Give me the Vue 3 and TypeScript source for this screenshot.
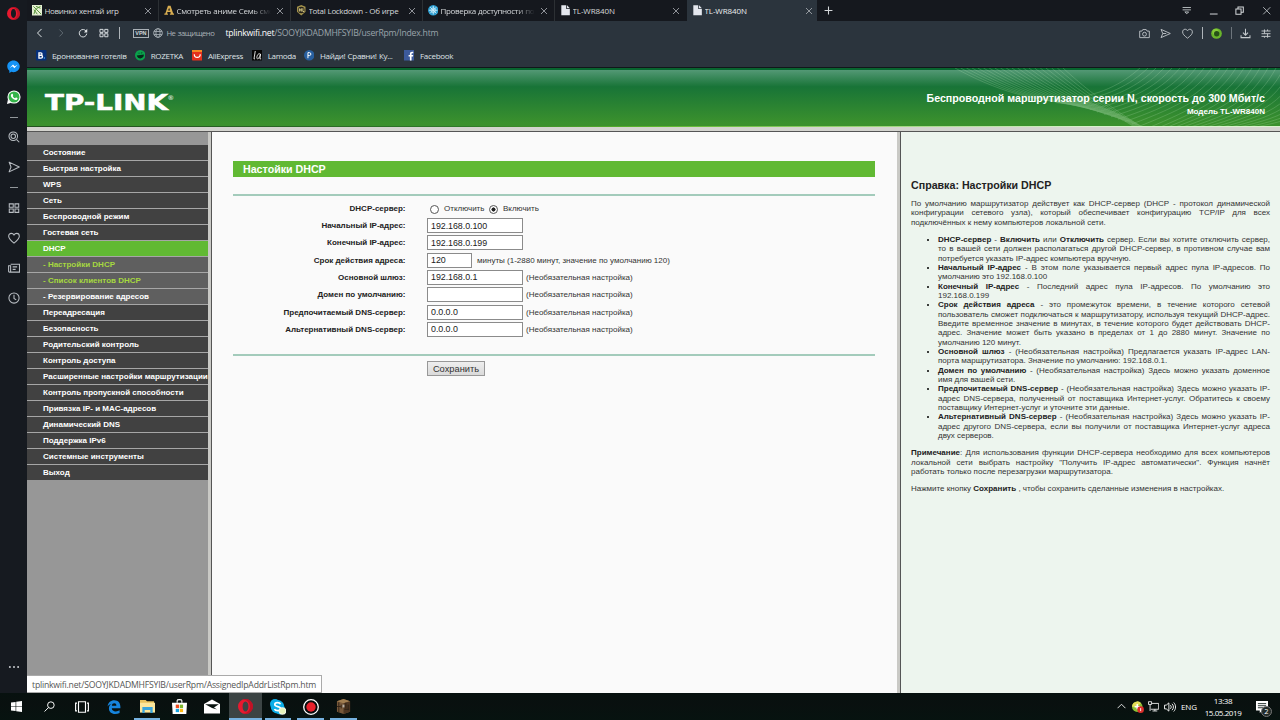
<script setup lang="ts">
import { ref, reactive, computed } from "vue";

interface Tab {
  title: string;
  icon: string;
  fade?: boolean;
}

interface Field {
  label: string;
  key: string;
  short?: boolean;
  note?: string;
}

// svg bodies, all drawn on a 16x16 grid
const icons: Record<string, string> = {
  opera: `<path fill="#e8192f" fill-rule="evenodd" d="M8 0a8 8 0 1 0 0 16A8 8 0 0 0 8 0zm0 2.6c2 0 3.1 2.4 3.1 5.4S10 13.4 8 13.4 4.9 11 4.9 8 6 2.6 8 2.6z"/><path fill="#a70e20" d="M8 0c4.400 0 8 3.600 8 8s-3.600 8-8 8c-1 0-2-.2-2.500-.5C9.500 15.500 12.800 12 12.800 8S9.500.5 5.500.5C6 .2 7 0 8 0z" opacity=".6"/>`,
  messenger: `<path fill="#1593f5" d="M8 .5C3.700.5.3 3.700.3 7.800c0 2.200 1 4.100 2.600 5.400V16l2.500-1.400c.8.2 1.700.4 2.600.4 4.300 0 7.700-3.200 7.700-7.200S12.300.5 8 .5z"/><path fill="#fff" d="M3.300 9.900l4.100-4.300 2.100 2.100 3.500-2-4 4.300-2.200-2.200z"/>`,
  whatsapp: `<circle cx="8" cy="8" r="7.500" fill="#fff"/><path fill="#fff" d="M1 11L0 16l5-1.500z"/><circle cx="8" cy="8" r="6.300" fill="#35b44a"/><path fill="#fff" d="M5.700 4.300c.6-.4 1 0 1.300 1.300.2.700-.5 1-.3 1.400.5 1 1.300 1.900 2.500 2.300.5.1.8-1 1.300-.8 1.400.6 1.800.9 1.500 1.500-.7 1.800-2.500 1.700-4.400.6C5.400 9.400 4 7.200 4.500 5.700c.2-.6.600-1.100 1.200-1.400z"/>`,
  search: `<g fill="none" stroke="#b8bdc2" stroke-width="1.400"><circle cx="7" cy="7" r="5.700"/><circle cx="7" cy="7" r="3"/><path d="M11.500 11.500L15 15"/></g>`,
  send: `<path fill="none" stroke="#b8bdc2" stroke-width="1.400" stroke-linejoin="round" d="M1.500 1.500L15 8 1.500 14.500 4 8z"/>`,
  grid: `<path fill="none" stroke="#b8bdc2" stroke-width="1.400" d="M1.700 2.500H7V7H1.700zM9.300 2.500h5V7h-5zM1.700 9.300H7v4.500H1.700zM9.300 9.300h5v4.500h-5z"/>`,
  heart: `<path fill="none" stroke="#b8bdc2" stroke-width="1.400" d="M8 14.800C3 11 .9 8.700.9 5.700c0-2.200 1.500-3.900 3.500-3.900C6 1.800 7.300 2.700 8 4c.7-1.300 2-2.200 3.600-2.200 2 0 3.500 1.700 3.500 3.900 0 3-2.100 5.300-7.100 9.100z"/>`,
  news: `<path fill="none" stroke="#b8bdc2" stroke-width="1.400" d="M3.500 3h11.800v10.500H2c-.8 0-1.200-.5-1.200-1.200V5h2.700v7.500M6.200 6.500h6M6.200 9.800h4"/>`,
  clock: `<g fill="none" stroke="#b8bdc2" stroke-width="1.400"><circle cx="8" cy="8" r="6.800"/><path d="M8 3.800V8.500l3 2"/></g>`,
  dots: `<g fill="#c9cdd0"><circle cx="2.500" cy="8" r="1.300"/><circle cx="8" cy="8" r="1.300"/><circle cx="13.500" cy="8" r="1.300"/></g>`,
  back: `<path fill="none" stroke="#dfe3e6" stroke-width="1.600" d="M10.500 1.500L4 8l6.500 6.500"/>`,
  forward: `<path fill="none" stroke="#5e6870" stroke-width="1.600" d="M5.500 2.500L11 8l-5.500 5.500"/>`,
  reload: `<path fill="none" stroke="#dfe3e6" stroke-width="1.500" d="M13.300 5.500A6 6 0 1 0 14 9"/><path fill="#dfe3e6" d="M14.800 1v6H9.500z"/>`,
  speed: `<path fill="none" stroke="#dfe3e6" stroke-width="1.500" d="M1.500 2.200h5V7h-5zM9.200 2.200h5V7h-5zM1.500 9.200h5V14h-5zM9.200 9.200h5V14h-5z"/>`,
  globe: `<g fill="none" stroke="#a9b1b7" stroke-width="1.400"><circle cx="8" cy="8" r="6.900"/><ellipse cx="8" cy="8" rx="3.300" ry="6.900"/><path d="M1.500 5.500h13M1.500 10.500h13"/></g>`,
  camera: `<g fill="none" stroke="#b8bdc2" stroke-width="1.400"><path d="M1 4.500h3.200L5.500 2.300h5l1.300 2.200H15v9.500H1z"/><circle cx="8" cy="9" r="2.800"/></g>`,
  plane: `<path fill="none" stroke="#b8bdc2" stroke-width="1.400" stroke-linejoin="round" d="M1.500 2L15 8 1.500 14 4 8zM4 8h5"/>`,
  orb: `<circle cx="8" cy="8" r="7.800" fill="#69b52b"/><circle cx="6.500" cy="5.500" r="4.500" fill="#9ad843" opacity=".6"/><circle cx="8.300" cy="8.300" r="3.900" fill="#265117"/>`,
  download: `<path fill="none" stroke="#c5cacd" stroke-width="1.500" d="M8 1v9M4.300 6.800L8 10.500l3.700-3.700M1.500 10.500V14h13v-3.500"/>`,
  sliders: `<path fill="none" stroke="#c5cacd" stroke-width="1.500" d="M.8 4h14.400M.8 8.300h14.400M.8 12.600h14.400M5.500 1.500v6.800M10.500 1.500V4M10.500 8.300v6.500M5.500 12.600v2.200"/>`,
  close: `<path fill="none" stroke="#aeb3b7" stroke-width="1.600" d="M2 2l12 12M14 2L2 14"/>`,
  plus: `<path fill="none" stroke="#d4d7da" stroke-width="1.900" d="M8 1v14M1 8h14"/>`,
  tabmenu: `<path fill="none" stroke="#c5cacd" stroke-width="1.500" d="M1 2.500h14M1 6.500h14M4.800 10L8 13.200 11.200 10z"/>`,
  minimize: `<path stroke="#d4d7da" stroke-width="1.700" d="M1.500 13.500h13"/>`,
  restore: `<path fill="none" stroke="#d4d7da" stroke-width="1.700" d="M1.500 5h8.700v8.700H1.500zM5 5V1.700h9v8.700h-3.800"/>`,
  page: `<path fill="#e4e7ee" d="M2 .5h7.500V6H15v9.500H2z"/><path fill="#e4e7ee" d="M10.700.5L15 4.900h-4.300z"/>`,
  puzzle: `<path fill="#e5efd3" d="M0 0h16v16H0z"/><path fill="none" stroke="#58933a" stroke-width="1.500" d="M2 2l12 12M13 2c-6 3-9 5-10 12M6 2l7 3M3 7l5 7"/>`,
  letterA: `<path fill="#d8ad51" fill-rule="evenodd" d="M6 1h4l4 12h1.500v2H9v-2h1.500l-.7-2.300H5.300L4.500 13H6v2H.5v-2H2zm.2 7.500h3L7.800 4z"/>`,
  badge: `<path fill="#a4934c" d="M8 0l6.500 2.700v7.500L8 16l-6.500-5.800V2.700z"/><circle cx="8" cy="7.500" r="5" fill="#26231a"/><path stroke="#e0d18b" stroke-width="1.500" d="M5 5v5M5 7.500h3M8 5v5M10.500 5v5h2"/>`,
  snow: `<circle cx="8" cy="8" r="8" fill="#2e9fd2"/><path stroke="#d5f1fb" stroke-width="1.300" fill="none" d="M8 1.500v13M1.500 8h13M3.300 3.300l9.400 9.400M12.700 3.300l-9.400 9.400"/><circle cx="8" cy="8" r="3.500" fill="none" stroke="#d5f1fb"/>`,
  booking: `<rect width="16" height="16" rx="1.500" fill="#06307b"/><path fill="none" stroke="#fff" stroke-width="2" d="M4.500 3.500v9h3c3.300 0 3.300-4.500 0-4.500h-3M4.500 4.300h2.700c2.600 0 2.600 3.700 0 3.700"/><circle cx="12.700" cy="12.300" r="1.200" fill="#4ca9ef"/>`,
  rozetka: `<circle cx="8" cy="8" r="8" fill="#0ba24c"/><path fill="#06271a" d="M2.700 8.500L13.500 7c.4 7-9.300 8-10.800 1.500zM4 4.500l3-.5v1.500zM9 3.700l3 .3-3 1.500z"/>`,
  ali: `<rect width="16" height="16" rx="1" fill="#e5301c"/><path fill="#f68b23" d="M0 0h16v3H0z"/><path fill="none" stroke="#fff" stroke-width="1.800" d="M3.500 6.500c0 6.500 9 6.500 9 0"/>`,
  lamoda: `<path fill="#050505" d="M0 0h16v16H0z"/><path fill="none" stroke="#fff" stroke-width="1.300" d="M5 1.500L3 13.500h1.500M12.500 6C8 4 6 13 8.500 13.500S13 6 13 6l-1 7.500h2"/>`,
  price: `<circle cx="8" cy="8" r="8" fill="#285f9f"/><path fill="none" stroke="#fff" stroke-width="1.500" d="M6 12.500V4h2.300c2.900 0 2.900 4.500 0 4.500H6"/>`,
  facebook: `<path fill="#3c5a9c" d="M0 0h16v16H0z"/><path fill="#fff" d="M9 16V9.800H7V7.500h2V5.700C9 3.700 10.200 2.500 12.200 2.500h1.900v2.300h-1.300c-1 0-1.300.4-1.300 1.200v1.500H14l-.3 2.300h-2.200V16z"/>`,
  windows: `<path fill="#fff" d="M0 2.300l6.700-1v6.200H0zM7.600 1.200L16 0v7.500H7.600zM0 8.500h6.700v6.200L0 13.700zM7.600 8.500H16V16l-8.400-1.200z"/>`,
  find: `<g fill="none" stroke="#fff" stroke-width="1.400"><circle cx="10" cy="6" r="4.800"/><path d="M6.500 9.500L.8 15.300"/></g>`,
  taskview: `<path fill="none" stroke="#fff" stroke-width="1.300" d="M4 2h8v12H4zM2.300 3.500H.7v9h1.600M13.700 3.500h1.600v9h-1.600"/>`,
  edge: `<path fill="#1684dc" d="M.7 7.300C1.300 2.800 4.300.3 8.300.3c4.500 0 7 3.200 7 7.500v1.700H5.500c.1 2.500 2.100 3.500 4.500 3.500 1.700 0 3.200-.4 4.400-1.200v3.100c-1.500.8-3.200 1.100-5 1.100-4.500 0-7.200-2.600-7.200-6.600 0-2.300 1.200-4.100 3.300-5C3.300 4.900 1.600 5.900.7 7.300zm4.900-.8h5.100c0-1.700-.8-2.700-2.400-2.700-1.500 0-2.500 1-2.700 2.700z"/>`,
  folder: `<path fill="#e9c25e" d="M0 1h6l1.500 1.500H15v3H0z"/><path fill="#fce69b" d="M0 4h16v10.500H0z"/><path fill="#38a4dc" d="M2.500 8.500h11V15H11v-3.300H5V15H2.500z"/>`,
  store: `<path fill="none" stroke="#fff" stroke-width="1.200" d="M5.500 4V1.500C5.500.3 10.500.3 10.500 1.500V4"/><path fill="#fff" d="M0 4h16l-.7 12H.7z"/><path fill="#f04e23" d="M4 6h3.500v3.700H4z"/><path fill="#7db72f" d="M8.300 6h3.500v3.700H8.300z"/><path fill="#16a5e5" d="M4 10.500h3.500V14H4z"/><path fill="#fdb813" d="M8.300 10.500h3.500V14H8.300z"/>`,
  mail: `<path fill="#fff" d="M0 5l8-4.500L16 5v9.500H0z"/><path fill="#08120f" d="M1.200 5.300h13.600L10 8.400l3 2.200-5-1.500z"/>`,
  skype: `<circle cx="5" cy="5" r="5" fill="#0cade8"/><circle cx="10" cy="10.500" r="5" fill="#0cade8"/><circle cx="7.500" cy="7.800" r="6.800" fill="#0cade8"/><path fill="none" stroke="#fff" stroke-width="1.700" d="M10.500 5.200C9.800 3.300 4.800 3 4.800 5.500c0 2.700 5.900 1.400 5.900 4.200 0 2.600-5.400 2.500-6.200.3"/><circle cx="12.500" cy="12" r="3.800" fill="#f3f8e8"/><circle cx="12.500" cy="12" r="2.800" fill="#e8f4bb"/>`,
  record: `<circle cx="8" cy="8" r="7.300" fill="#090b0b" stroke="#fff" stroke-width="1.300"/><circle cx="8" cy="8" r="4.700" fill="#e9202b"/>`,
  cube: `<path fill="#77583a" d="M8 0l7 2.500v11L8 16l-7-2.500v-11z"/><path fill="#a07d50" d="M8 0l7 2.500-7 2-7-2z"/><path fill="#4d3622" d="M8 4.500l7-2v11L8 16z"/><path stroke="#2e2115" d="M3 3.500V14M5.500 6v4M10.500 4v6M13 6v6M1 8h4M9 11h5"/><path fill="#b5afa5" d="M7 6h2v3H7z"/>`,
  chevron: `<path fill="none" stroke="#fff" stroke-width="1.500" d="M1 11l7-7 7 7"/>`,
  shield: `<circle cx="7" cy="7.500" r="7" fill="#8bbf35"/><path fill="#e4dc58" d="M7 .5a7 7 0 0 1 5 2L7 7.500H0a7 7 0 0 1 7-7z"/><path stroke="#fff" stroke-width="2" d="M3.500 7.500h7M7 4v7"/><circle cx="11.500" cy="11.500" r="4.400" fill="#dc2f2b"/><path stroke="#fff" stroke-width="1.200" d="M11.500 9.500v4"/>`,
  network: `<path fill="none" stroke="#fff" stroke-width="1.200" d="M5.500 3.500h10V12H4M10 12v2.500M6.500 14.500h7M.7 1h4.500v4H.7zM3 5v9.500"/>`,
  volume: `<path fill="none" stroke="#fff" stroke-width="1.200" d="M.7 5.500H3L6.500 2.500v11L3 10.500H.7zM8.500 5.500c1.500 1.500 1.500 3.500 0 5M10.700 3.700c2.500 2.500 2.500 6 0 8.600M12.900 2c3.300 3.300 3.300 8.700 0 12"/>`,
  notes: `<path fill="#fff" d="M0 0h16v12.500H8.500L5 16v-3.500H0z"/><path stroke="#14211e" stroke-width="1.200" d="M2.500 3.500h11M2.500 6.300h11M2.500 9h7"/>`,
};

const tabs: Tab[] = [
  { title: "Новинки хентай игр", icon: "puzzle" },
  { title: "Смотреть аниме Семь сме", icon: "letterA", fade: true },
  { title: "Total Lockdown - Об игре", icon: "badge" },
  { title: "Проверка доступности по", icon: "snow", fade: true },
  { title: "TL-WR840N", icon: "page" },
  { title: "TL-WR840N", icon: "page" },
];
const activeTab = ref(5);

const bookmarks = [
  { title: "Бронювання готелів", icon: "booking", width: 98.7 },
  { title: "ROZETKA", icon: "rozetka", width: 57.3 },
  { title: "AliExpress", icon: "ali", width: 59.7 },
  { title: "Lamoda", icon: "lamoda", width: 52.3 },
  { title: "Найди! Сравни! Ку...", icon: "price", width: 100 },
  { title: "Facebook", icon: "facebook", width: 60 },
];

const menu = [
  "Состояние",
  "Быстрая настройка",
  "WPS",
  "Сеть",
  "Беспроводной режим",
  "Гостевая сеть",
  "DHCP",
  "Настройки DHCP",
  "Список клиентов DHCP",
  "Резервирование адресов",
  "Переадресация",
  "Безопасность",
  "Родительский контроль",
  "Контроль доступа",
  "Расширенные настройки маршрутизации",
  "Контроль пропускной способности",
  "Привязка IP- и MAC-адресов",
  "Динамический DNS",
  "Поддержка IPv6",
  "Системные инструменты",
  "Выход",
].map((title, index) => ({
  title,
  sub: index > 6 && index < 10,
  active: index === 6,
  lit: index === 7 || index === 8,
}));

const optional = "(Необязательная настройка)";
const fields: Field[] = [
  { label: "Начальный IP-адрес:", key: "start" },
  { label: "Конечный IP-адрес:", key: "end" },
  { label: "Срок действия адреса:", key: "lease", short: true, note: "минуты (1-2880 минут, значение по умолчанию 120)" },
  { label: "Основной шлюз:", key: "gateway", note: optional },
  { label: "Домен по умолчанию:", key: "domain", note: optional },
  { label: "Предпочитаемый DNS-сервер:", key: "dns1", note: optional },
  { label: "Альтернативный DNS-сервер:", key: "dns2", note: optional },
];

const enabled = ref("on");
const form = reactive<Record<string, string>>({
  start: "192.168.0.100",
  end: "192.168.0.199",
  lease: "120",
  gateway: "192.168.0.1",
  domain: "",
  dns1: "0.0.0.0",
  dns2: "0.0.0.0",
});

const taskbar = [
  { icon: "windows", size: 11 },
  { icon: "find", size: 11 },
  { icon: "taskview", size: 14 },
  { icon: "edge", size: 14 },
  { icon: "folder", size: 15, open: true },
  { icon: "store", size: 15 },
  { icon: "mail", size: 16 },
  { icon: "opera", size: 15, open: true, active: true },
  { icon: "skype", size: 16, open: true },
  { icon: "record", size: 16, open: true },
  { icon: "cube", size: 15, open: true },
];

// thin lines of the banner pattern
const waves = computed(() => {
  const result: string[] = [];
  for (let i = 0; i < 20; i++) {
    const k = i / 19;
    result.push(`M${5 + k * 108} 0 C${45 + k * 90} ${22 - k * 2} ${85 + k * 65} ${34 - k * 2} ${125 + k * 65} ${35 + k * 23}`);
  }
  for (let i = 0; i < 26; i++) {
    const x = i * 8;
    result.push(`M${190 + x} 0 C${172 + x} ${16 + i} ${150 + x} ${28 + i} ${112 + i * 7} ${Math.min(62, 32 + i * 2.4)}`);
  }
  return result;
});
</script>

<template>
  <div class="screen">
    <div class="browser">
      <aside class="side">
        <svg class="i-opera" viewBox="0 0 16 16" v-html="icons.opera" />
        <svg class="i-msg" viewBox="0 0 16 16" v-html="icons.messenger" />
        <svg class="i-wa" viewBox="0 0 16 16" v-html="icons.whatsapp" />
        <i class="dash"></i>
        <svg class="i-tool first" viewBox="0 0 16 16" v-html="icons.search" />
        <svg class="i-tool" viewBox="0 0 16 16" v-html="icons.send" />
        <i class="dash second"></i>
        <svg class="i-tool grid" viewBox="0 0 16 16" v-html="icons.grid" />
        <svg class="i-tool" viewBox="0 0 16 16" v-html="icons.heart" />
        <svg class="i-tool" viewBox="0 0 16 16" v-html="icons.news" />
        <svg class="i-tool" viewBox="0 0 16 16" v-html="icons.clock" />
        <svg class="i-dots" viewBox="0 0 16 16" v-html="icons.dots" />
      </aside>

      <div class="window">
        <div class="tabs">
          <div v-for="(tab, index) in tabs" :key="index" class="tab" :class="{ active: index === activeTab }" @click="activeTab = index">
            <svg class="fav" viewBox="0 0 16 16" v-html="icons[tab.icon]" />
            <span class="tab-title" :class="{ fade: tab.fade, latin: tab.icon === 'page' }">{{ tab.title }}</span>
            <svg class="x" viewBox="0 0 16 16" v-html="icons.close" />
          </div>
          <svg class="plus" viewBox="0 0 16 16" v-html="icons.plus" />
          <div class="controls">
            <svg viewBox="0 0 16 16" v-html="icons.tabmenu" />
            <svg viewBox="0 0 16 16" v-html="icons.minimize" />
            <svg viewBox="0 0 16 16" v-html="icons.restore" />
            <svg viewBox="0 0 16 16" v-html="icons.close" />
          </div>
        </div>

        <div class="address">
          <div class="nav">
            <svg viewBox="0 0 16 16" v-html="icons.back" />
            <svg viewBox="0 0 16 16" v-html="icons.forward" />
            <svg viewBox="0 0 16 16" v-html="icons.reload" />
            <svg viewBox="0 0 16 16" v-html="icons.speed" />
          </div>
          <i class="bar"></i>
          <span class="vpn">VPN</span>
          <svg class="globe" viewBox="0 0 16 16" v-html="icons.globe" />
          <span class="insecure">Не защищено</span>
          <span class="url"><b>tplinkwifi.net</b>/SOOYJKDADMHFSYIB/userRpm/Index.htm</span>
          <div class="actions">
            <svg viewBox="0 0 16 16" v-html="icons.camera" />
            <svg viewBox="0 0 16 16" v-html="icons.plane" />
            <svg viewBox="0 0 16 16" v-html="icons.heart" />
            <i class="bar"></i>
            <svg viewBox="0 0 16 16" v-html="icons.orb" />
            <i class="bar dim"></i>
            <svg viewBox="0 0 16 16" v-html="icons.download" />
            <svg class="last" viewBox="0 0 16 16" v-html="icons.sliders" />
          </div>
        </div>

        <div class="bookmarks">
          <div v-for="item in bookmarks" :key="item.title" class="bookmark" :style="{ width: `${item.width}px` }">
            <svg viewBox="0 0 16 16" v-html="icons[item.icon]" />
            <span>{{ item.title }}</span>
          </div>
        </div>

        <header class="banner">
          <svg class="waves" viewBox="0 0 330 58">
            <path v-for="(d, index) in waves" :key="index" :d="d" />
            <path class="swoosh" d="M105 35 Q155 40 182 58 L192 58 Q165 42 128 30 Z" />
          </svg>
          <svg class="logo" width="136" height="22" viewBox="0 0 136 22">
            <text x="1" y="18.300" textLength="123" lengthAdjust="spacingAndGlyphs">TP-LINK</text>
            <text class="reg" x="123.500" y="7.500">®</text>
          </svg>
          <div class="product">
            <div class="name">Беспроводной маршрутизатор серии N, скорость до 300 Мбит/с</div>
            <div class="model">Модель TL-WR840N</div>
          </div>
        </header>
        <div class="split"></div>

        <div class="frames">
          <nav class="menu">
            <div v-for="item in menu" :key="item.title" class="menu-item" :class="{ sub: item.sub, active: item.active, lit: item.lit }">
              <span v-if="item.sub">- </span>{{ item.title }}
            </div>
          </nav>
          <i class="divider"></i>

          <main class="content">
            <h1>Настойки DHCP</h1>
            <hr />
            <form @submit.prevent>
              <div class="row">
                <label class="label">DHCP-сервер:</label>
                <input v-model="enabled" type="radio" value="off" /><span class="choice">Отключить</span>
                <input v-model="enabled" type="radio" value="on" /><span class="choice">Включить</span>
              </div>
              <div v-for="field in fields" :key="field.key" class="row">
                <label class="label">{{ field.label }}</label>
                <input v-model="form[field.key]" type="text" :class="{ short: field.short }" />
                <span v-if="field.note" class="note">{{ field.note }}</span>
              </div>
            </form>
            <hr class="bottom" />
            <button>Сохранить</button>
          </main>
          <i class="divider"></i>

          <section class="help">
            <h2>Справка: Настройки DHCP</h2>
            <p>
              По умолчанию маршрутизатор действует как DHCP-сервер (DHCP - протокол динамической конфигурации сетевого узла), который обеспечивает
              конфигурацию TCP/IP для всех подключённых к нему компьютеров локальной сети.
            </p>
            <ul>
              <li>
                <b>DHCP-сервер</b> - <b>Включить</b> или <b>Отключить</b> сервер. Если вы хотите отключить сервер, то в вашей сети должен располагаться
                другой DHCP-сервер, в противном случае вам потребуется указать IP-адрес компьютера вручную.
              </li>
              <li><b>Начальный IP-адрес</b> - В этом поле указывается первый адрес пула IP-адресов. По умолчанию это 192.168.0.100</li>
              <li><b>Конечный IP-адрес</b> - Последний адрес пула IP-адресов. По умолчанию это 192.168.0.199</li>
              <li>
                <b>Срок действия адреса</b> - это промежуток времени, в течение которого сетевой пользователь сможет подключаться к маршрутизатору,
                используя текущий DHCP-адрес. Введите временное значение в минутах, в течение которого будет действовать DHCP-адрес. Значение может быть
                указано в пределах от 1 до 2880 минут. Значение по умолчанию 120 минут.
              </li>
              <li>
                <b>Основной шлюз</b> - (Необязательная настройка) Предлагается указать IP-адрес LAN-порта маршрутизатора. Значение по умолчанию:
                192.168.0.1.
              </li>
              <li><b>Домен по умолчанию</b> - (Необязательная настройка) Здесь можно указать доменное имя для вашей сети.</li>
              <li>
                <b>Предпочитаемый DNS-сервер</b> - (Необязательная настройка) Здесь можно указать IP-адрес DNS-сервера, полученный от поставщика
                Интернет-услуг. Обратитесь к своему поставщику Интернет-услуг и уточните эти данные.
              </li>
              <li>
                <b>Альтернативный DNS-сервер</b> - (Необязательная настройка) Здесь можно указать IP-адрес другого DNS-сервера, если вы получили от
                поставщика Интернет-услуг адреса двух серверов.
              </li>
            </ul>
            <p>
              <b>Примечание</b>: Для использования функции DHCP-сервера необходимо для всех компьютеров локальной сети выбрать настройку "Получить
              IP-адрес автоматически". Функция начнёт работать только после перезагрузки маршрутизатора.
            </p>
            <p>Нажмите кнопку <b>Сохранить</b> , чтобы сохранить сделанные изменения в настройках.</p>
          </section>
        </div>
        <div class="status">tplinkwifi.net/SOOYJKDADMHFSYIB/userRpm/AssignedIpAddrListRpm.htm</div>
      </div>
    </div>

    <footer class="taskbar">
      <div v-for="item in taskbar" :key="item.icon" class="task" :class="{ open: item.open, active: item.active }">
        <svg viewBox="0 0 16 16" :style="{ width: `${item.size}px`, height: `${item.size}px` }" v-html="icons[item.icon]" />
      </div>
      <div class="tray">
        <svg class="chev" viewBox="0 0 16 16" v-html="icons.chevron" />
        <svg class="shield" viewBox="0 0 16 16" v-html="icons.shield" />
        <svg class="net" viewBox="0 0 16 16" v-html="icons.network" />
        <svg class="vol" viewBox="0 0 16 16" v-html="icons.volume" />
        <span class="lang">ENG</span>
        <div class="time"><span>13:38</span><span>15.05.2019</span></div>
        <div class="notes">
          <svg viewBox="0 0 16 16" v-html="icons.notes" />
          <span class="count">2</span>
        </div>
      </div>
    </footer>
  </div>
</template>

<style>
body {
  margin: 0;
  overflow: hidden;
}
</style>

<style scoped>
* {
  box-sizing: border-box;
}
svg,
i {
  display: block;
  flex: none;
}
.screen {
  display: flex;
  flex-direction: column;
  width: 1280px;
  height: 720px;
  overflow: hidden;
  font-family: "Open Sans", "Noto Sans", sans-serif;
  font-size: 8px;
  white-space: nowrap;
}
.browser {
  display: flex;
  height: 693px;
}

/* left strip */
.side {
  display: flex;
  flex-direction: column;
  align-items: center;
  flex: none;
  width: 27px;
  padding-top: 7px;
  background: #161a20;
}
.i-opera {
  width: 13px;
  height: 13px;
}
.i-msg {
  width: 13px;
  height: 13px;
  margin-top: 40px;
}
.i-wa {
  width: 14px;
  height: 14px;
  margin-top: 17px;
}
.dash {
  width: 8px;
  height: 1px;
  margin-top: 13px;
  background: #92979b;
}
.i-tool {
  width: 12px;
  height: 12px;
  margin-top: 18px;
}
.i-tool.first {
  margin-top: 13px;
}
.dash.second {
  margin-top: 14px;
}
.i-tool.grid {
  margin-top: 14px;
}
.i-dots {
  width: 12px;
  height: 12px;
  margin: auto 0 20px;
}

.window {
  display: flex;
  flex-direction: column;
  position: relative;
  width: 1253px;
}

/* tab strip */
.tabs {
  display: flex;
  height: 21px;
  background: #15181e;
}
.tab {
  display: flex;
  align-items: center;
  flex: none;
  width: 132px;
  padding: 0 6px 0 4.500px;
  border-right: 1px solid #2c3034;
  color: #d5d8db;
}
.tab:nth-child(5) {
  border-color: transparent;
}
.tab.active {
  width: 130px;
  padding-right: 4px;
  border: 0;
  background: #2b343d;
  color: #eceef0;
}
.fav {
  width: 10.500px;
  height: 10.500px;
  margin-right: 2.500px;
}
.tab-title {
  flex: 1;
  overflow: hidden;
  letter-spacing: -0.330px;
  word-spacing: 0.400px;
}
.tab-title.latin {
  letter-spacing: -0.100px;
}
.fade {
  margin-right: 5px;
  mask-image: linear-gradient(90deg, #000 80%, transparent);
}
.x {
  width: 8px;
  height: 8px;
}
.plus {
  width: 9px;
  height: 9px;
  margin: 6px 0 0 7px;
}
.controls {
  display: flex;
  align-items: center;
  gap: 17px;
  margin: 0 9px 0 auto;
}
.controls svg {
  width: 9.500px;
  height: 9.500px;
}

.address {
  display: flex;
  align-items: center;
  height: 24px;
  padding-left: 8px;
  background: #2b343d;
}
.nav {
  display: flex;
  gap: 11.300px;
}
.nav svg {
  width: 10px;
  height: 10px;
}
.bar {
  width: 1px;
  height: 12px;
  margin-left: 10px;
  background: #aeb4b9;
}
.bar.dim {
  background: #6d757c;
}
.vpn {
  width: 16px;
  height: 9px;
  margin-left: 13px;
  border: 1px solid #aab1b7;
  color: #cfd4d7;
  font: bold 5.500px/7px "Liberation Sans", sans-serif;
  text-align: center;
}
.globe {
  width: 10px;
  height: 10px;
  margin-left: 4px;
}
.insecure {
  width: 59px;
  margin-left: 3.500px;
  color: #a9b1b7;
  font-size: 7.700px;
  letter-spacing: -0.500px;
  word-spacing: 1px;
}
.url {
  color: #9ba4ab;
  font-size: 8.670px;
  letter-spacing: -0.230px;
}
.url b {
  color: #fff;
  font-weight: 400;
}
.actions {
  display: flex;
  align-items: center;
  margin: 0 9px 0 auto;
}
.actions svg {
  width: 11px;
  height: 11px;
  margin-left: 10.300px;
}
.actions .bar {
  margin-left: 9px;
}
.actions .bar + svg {
  margin-left: 8px;
}
.actions .last {
  width: 10px;
}

.bookmarks {
  display: flex;
  height: 23px;
  padding: 0 0 1px 9px;
  border-bottom: 1px solid #11171a;
  background: #2b343d;
  color: #dfe2e5;
  letter-spacing: -0.310px;
  word-spacing: 0.500px;
}
.bookmark {
  display: flex;
  align-items: center;
  gap: 5.500px;
}
.bookmark svg {
  width: 10.500px;
  height: 10.500px;
}

/* router page */
.banner {
  display: flex;
  justify-content: space-between;
  position: relative;
  height: 58px;
  padding: 0 15px 0 17px;
  border-top: 2px solid #08652f;
  background: linear-gradient(#539875, #187437 30%, #3b912d 95%);
  color: #fff;
  font-family: "Liberation Sans", sans-serif;
  font-weight: bold;
}
.waves {
  position: absolute;
  top: -2px;
  right: 0;
  width: 330px;
  height: 58px;
  fill: none;
  stroke: #b8e2b7;
  stroke-width: 0.500;
  opacity: 0.450;
}
.waves .swoosh {
  fill: #c7e8c3;
  stroke: none;
  opacity: 0.500;
}
.logo {
  margin-top: 22px;
  fill: #fff;
  stroke: #fff;
  stroke-width: 0.500;
  font: bold 22px "DejaVu Sans", sans-serif;
}
.reg {
  stroke: none;
  font-size: 6.500px;
  font-weight: 400;
}
.product {
  position: relative;
  text-align: right;
}
.name {
  margin-top: 22px;
  font-size: 10.670px;
  line-height: 13px;
}
.model {
  margin-top: 1px;
  font-size: 8px;
  line-height: 12px;
}
.split {
  height: 6px;
  border-bottom: 1px solid #555;
  background: linear-gradient(90deg, #24521f 5%, #2f7a28 35%, #5db52c 50%, #93d06c 65%, #d9f3cc 85%) 0 0 / 100% 1px no-repeat, #d4d4cf;
}
.frames {
  display: flex;
  height: 561px;
  font-family: "Liberation Sans", sans-serif;
}
.divider {
  width: 4px;
  border-right: 1px solid #555;
  background: #c9c9c5;
}
.menu {
  flex: none;
  width: 181px;
  padding-top: 13px;
  background: #979797;
  color: #fff;
  font-weight: bold;
}
.menu-item {
  height: 16px;
  padding-left: 16px;
  border-bottom: 1px solid #a6a6a6;
  background: #414141;
  line-height: 15px;
}
.menu-item:last-child {
  height: 15px;
  border: 0;
}
.menu-item.sub {
  background: #5f5f5f;
}
.menu-item.active {
  background: #61b933;
}
.lit {
  color: #a6d840;
}

.content {
  flex: none;
  width: 685px;
  padding: 29px 22px 0 21px;
  background: #fafafa;
  color: #333;
}
h1 {
  height: 16px;
  margin: 0 0 17px;
  padding-left: 10px;
  background: #61b933;
  color: #fff;
  font-size: 10.670px;
  line-height: 16px;
}
hr {
  height: 2px;
  margin: 0;
  border: 0;
  background: #a3cbbb;
}
form {
  padding-top: 3.600px;
}
.row {
  display: flex;
  align-items: center;
  height: 17.300px;
}
.label {
  flex: none;
  width: 172.500px;
  margin-right: 21.500px;
  color: #222;
  font-weight: bold;
  text-align: right;
}
input[type="text"] {
  width: 96px;
  height: 15px;
  margin: 0;
  padding: 0 3px;
  border: 1px solid #8b8b8b;
  background: #fff;
  color: #222;
  font: 8.900px "Liberation Sans", sans-serif;
  letter-spacing: -0.050px;
}
input.short {
  width: 45px;
  margin-right: 2px;
}
input[type="radio"] {
  appearance: none;
  width: 9px;
  height: 9px;
  margin: 2px 5px 0 3px;
  border: 1px solid #555;
  border-radius: 50%;
  background: #fff;
}
input[type="radio"]:checked {
  background: radial-gradient(circle, #222 0 1.800px, #fff 2.300px);
}
.choice {
  width: 42px;
}
.note {
  margin-left: 3px;
}
.bottom {
  margin-top: 16.500px;
}
button {
  display: block;
  width: 58px;
  height: 15px;
  margin: 5px 0 0 194px;
  padding: 0;
  border: 1px solid #989898;
  background: linear-gradient(#eee, #dadada);
  color: #333;
  font: 9.300px "Liberation Sans", sans-serif;
}

.help {
  flex: 1;
  padding: 47px 10px 0 10px;
  background: #edf5ee;
  color: #333;
  line-height: 9.333px;
  text-align: justify;
  white-space: normal;
}
h2 {
  margin: 0 0 8px;
  color: #222;
  font-size: 10.670px;
  line-height: 12px;
}
p {
  margin: 0 0 8px;
}
ul {
  margin: 0 0 8px;
  padding-left: 27px;
}
li::marker {
  color: #000;
}
.help b {
  color: #222;
}
.status {
  position: absolute;
  left: 0;
  bottom: 0;
  width: 295px;
  height: 18px;
  padding-left: 5px;
  border: 1px solid #aaa;
  border-left: 0;
  background: #fff;
  color: #555;
  font-size: 8.670px;
  line-height: 18px;
  letter-spacing: -0.210px;
}

/* system bar */
.taskbar {
  display: flex;
  height: 27px;
  background: linear-gradient(#07110f, #09100f 40%, #071310);
}
.task {
  display: flex;
  align-items: center;
  justify-content: center;
  width: 32.700px;
  height: 27px;
  border: solid transparent;
  border-width: 0 3px;
}
.task.open {
  background: linear-gradient(#76b2e0, #76b2e0) 0 100% / 100% 2px no-repeat;
  background-clip: padding-box;
}
.task.active {
  border-width: 0;
  background: linear-gradient(#76b2e0 0 0) 0 100% / 100% 2px no-repeat, #3c4444;
}
.tray {
  display: flex;
  align-items: center;
  margin: 0 12px 0 auto;
  color: #fff;
}
.chev {
  width: 9px;
  height: 9px;
}
.shield {
  width: 12px;
  height: 12px;
  margin-left: 6px;
}
.net {
  width: 11px;
  height: 11px;
  margin-left: 4px;
}
.vol {
  width: 12px;
  height: 12px;
  margin-left: 5px;
}
.lang {
  width: 16px;
  margin-left: 5px;
  letter-spacing: -0.100px;
}
.time {
  display: flex;
  flex-direction: column;
  align-items: center;
  width: 38px;
  margin-left: 7px;
  line-height: 12px;
  letter-spacing: -0.420px;
}
.notes {
  position: relative;
  margin-left: 14px;
}
.notes svg {
  width: 12px;
  height: 12px;
}
.count {
  position: absolute;
  top: 5px;
  left: 5px;
  width: 11px;
  height: 11px;
  border: 1px solid #777;
  border-radius: 50%;
  background: #222b29;
  font-size: 7.500px;
  line-height: 9px;
  text-align: center;
}
</style>
